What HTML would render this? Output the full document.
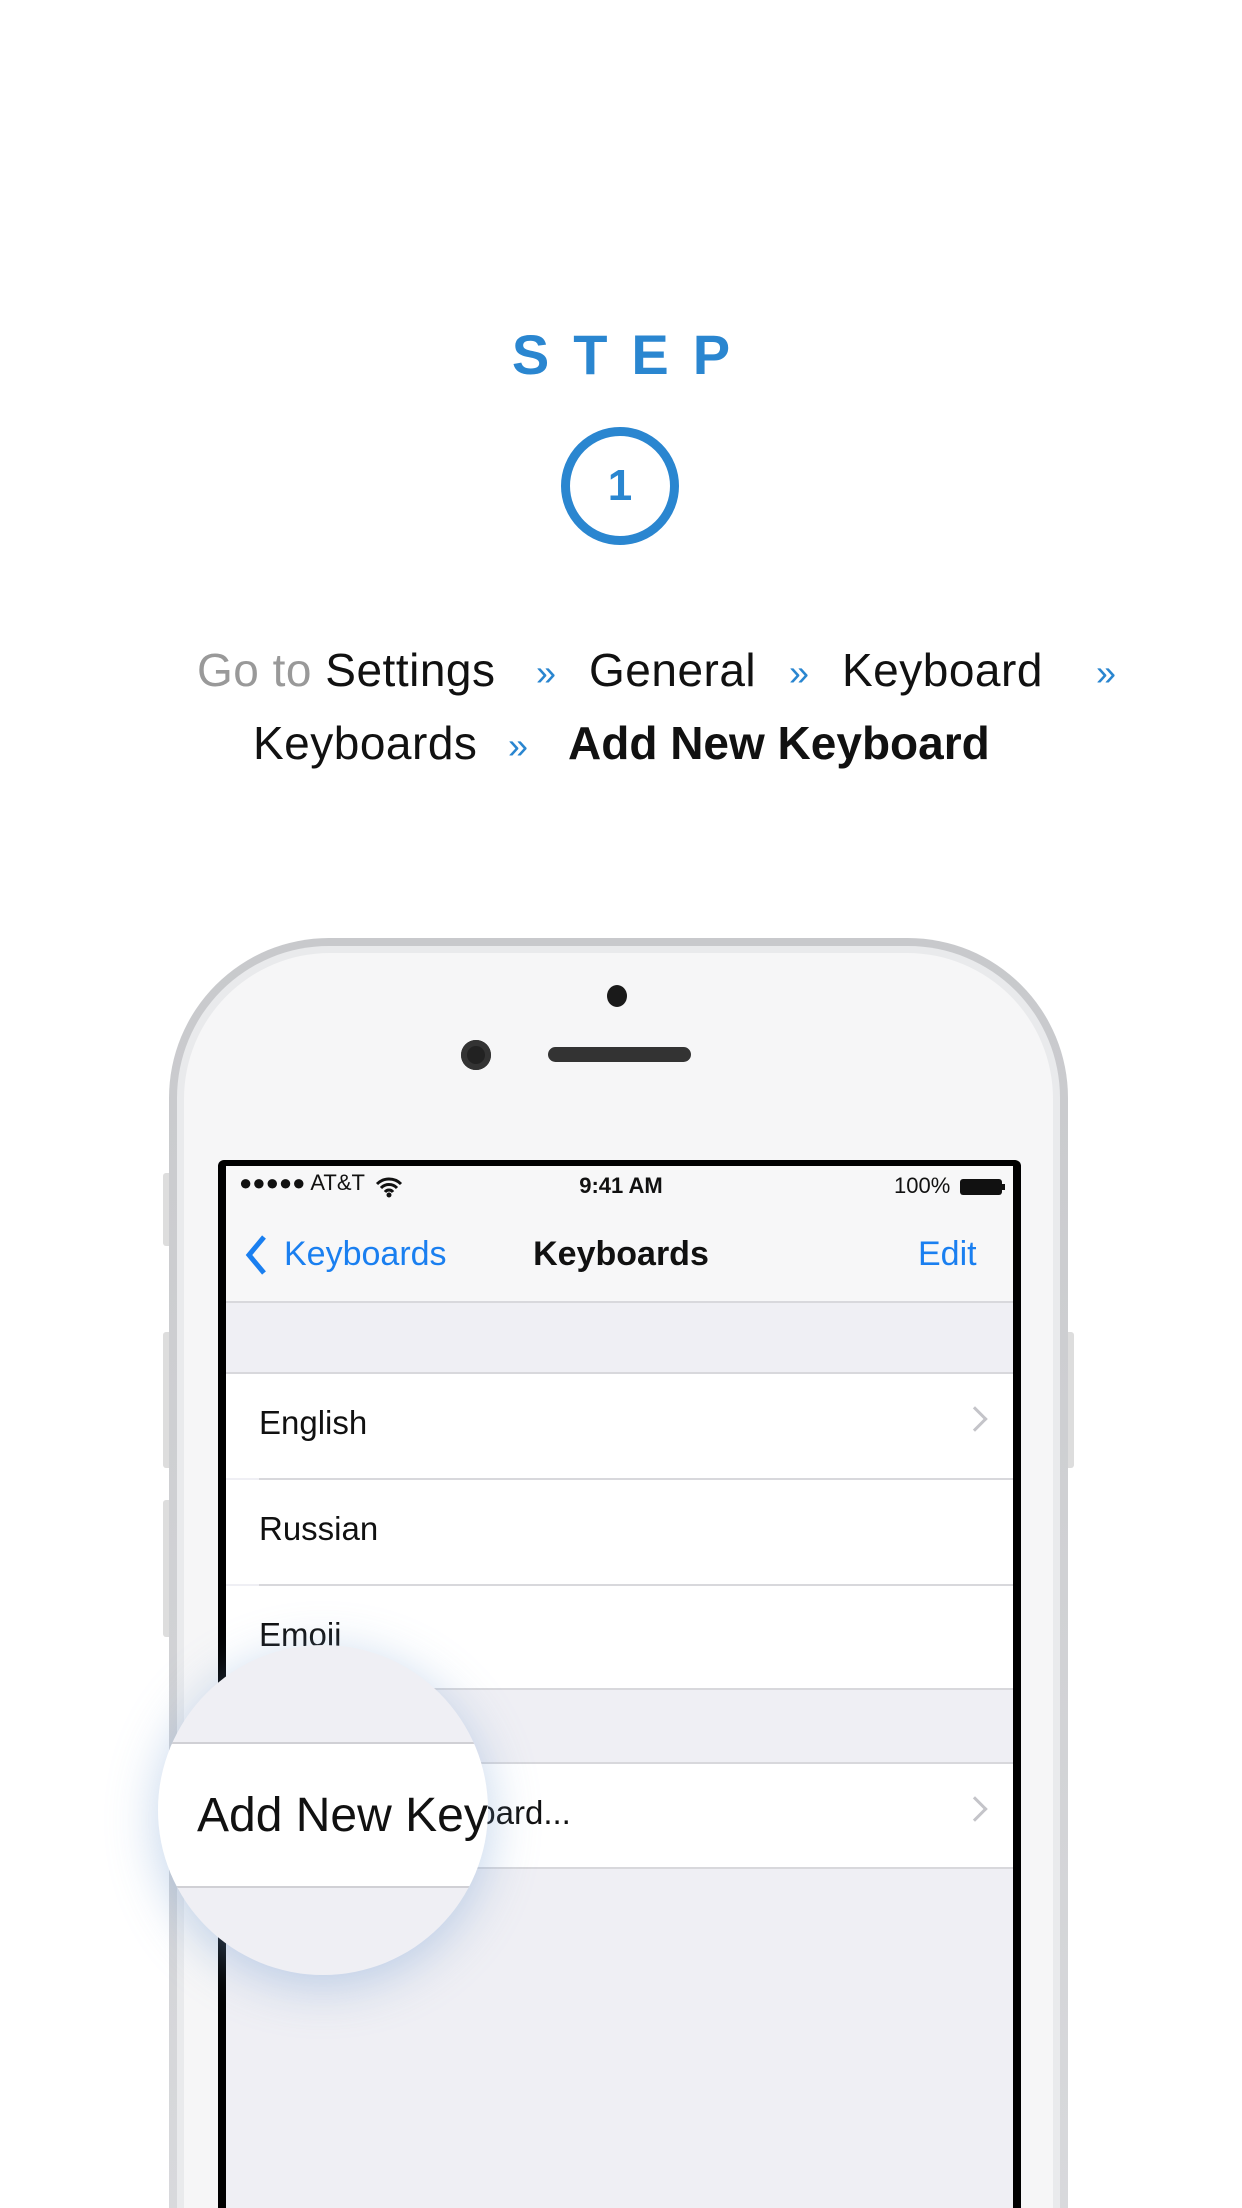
<!DOCTYPE html>
<html style="width:1242px;height:2208px;overflow:hidden"><head><meta charset="utf-8"><style>
*{margin:0;padding:0;box-sizing:border-box}
body{width:1242px;height:2208px;background:#fff;overflow:hidden;font-family:"Liberation Sans",sans-serif}
#w{position:relative;width:1242px;height:2208px;overflow:hidden}
.a{position:absolute;white-space:nowrap}
.bc{font-size:46px;color:#111;top:643px;letter-spacing:0.5px}
.ch{color:#2a86d0;font-size:36px}
.row{position:absolute;left:226px;width:787px;height:104px;background:#fff}
.row span{position:absolute;left:33px;top:30px;font-size:33px;color:#111}
.sep{position:absolute;height:2px;background:#d8d8dc}
.chev{position:absolute;left:740px;top:36px;width:18px;height:18px;border-right:3px solid #c4c4c9;border-top:3px solid #c4c4c9;transform:rotate(45deg)}
</style></head><body><div id="w">
<div class="a" style="left:0;width:1242px;text-align:center;top:322px;font-size:56px;font-weight:bold;color:#2a86d0;letter-spacing:24px;padding-left:24px">STEP</div>
<div class="a" style="left:561px;top:427px;width:118px;height:118px;border:9px solid #2a86d0;border-radius:50%;text-align:center;line-height:100px;font-size:44px;font-weight:bold;color:#2a86d0">1</div>
<div class="a bc" style="left:197px"><span style="color:#999">Go to</span> Settings</div>
<div class="a bc ch" style="left:536px;top:652px">»</div>
<div class="a bc" style="left:589px">General</div>
<div class="a bc ch" style="left:789px;top:652px">»</div>
<div class="a bc" style="left:842px">Keyboard</div>
<div class="a bc ch" style="left:1096px;top:652px">»</div>
<div class="a bc" style="left:253px;top:716px">Keyboards</div>
<div class="a bc ch" style="left:508px;top:725px">»</div>
<div class="a bc" style="left:568px;top:716px;font-weight:bold;letter-spacing:0">Add New Keyboard</div>

<div class="a" style="left:163px;top:1173px;width:10px;height:73px;background:#ddd;border-radius:3px"></div>
<div class="a" style="left:163px;top:1332px;width:10px;height:136px;background:#ddd;border-radius:3px"></div>
<div class="a" style="left:163px;top:1500px;width:10px;height:137px;background:#ddd;border-radius:3px"></div>
<div class="a" style="left:1064px;top:1332px;width:10px;height:136px;background:#ddd;border-radius:3px"></div>
<div class="a" style="left:169px;top:938px;width:899px;height:1600px;border-radius:160px;background:linear-gradient(#c8c9cc,#dcdde0);"></div>
<div class="a" style="left:177px;top:946px;width:883px;height:1600px;border-radius:152px;background:#e9eaec"></div>
<div class="a" style="left:184px;top:953px;width:869px;height:1600px;border-radius:146px;background:#f6f6f7"></div>
<div class="a" style="left:607px;top:985px;width:20px;height:22px;border-radius:50%;background:#1a1a1a"></div>
<div class="a" style="left:461px;top:1040px;width:30px;height:30px;border-radius:50%;background:#222;box-shadow:inset 0 0 0 6px #333"></div>
<div class="a" style="left:548px;top:1047px;width:143px;height:15px;border-radius:8px;background:#333"></div>
<div class="a" style="left:218px;top:1160px;width:803px;height:1100px;background:#000;border-radius:6px"></div>
<div class="a" style="left:226px;top:1166px;width:787px;height:1100px;background:#efeff4"></div>
<div class="a" style="left:226px;top:1166px;width:787px;height:135px;background:#f7f7f8"></div>
<div class="a" style="left:239px;top:1170px;font-size:22px;color:#111">●●●●● AT&amp;T</div>
<svg class="a" style="left:375px;top:1176px" width="28" height="22" viewBox="0 0 28 22"><path d="M2 8a17 17 0 0 1 24 0M6 12a11 11 0 0 1 16 0M10 16a5 5 0 0 1 8 0" fill="none" stroke="#111" stroke-width="3"/><circle cx="14" cy="19" r="2.5" fill="#111"/></svg>
<div class="a" style="left:0;width:1242px;text-align:center;top:1173px;font-size:22px;font-weight:bold;color:#111">9:41 AM</div>
<div class="a" style="left:894px;top:1173px;font-size:22px;color:#111">100%</div>
<div class="a" style="left:960px;top:1179px;width:42px;height:16px;background:#111;border-radius:3px"></div>
<div class="a" style="left:1002px;top:1184px;width:3px;height:6px;background:#111"></div>
<svg class="a" style="left:244px;top:1234px" width="26" height="42"><path d="M20 3L5 21l15 18" fill="none" stroke="#1a7ff0" stroke-width="5"/></svg>
<div class="a" style="left:284px;top:1235px;font-size:34px;color:#1a7ff0">Keyboards</div>
<div class="a" style="left:0;width:1242px;text-align:center;top:1235px;font-size:34px;font-weight:bold;color:#111">Keyboards</div>
<div class="a" style="left:918px;top:1235px;font-size:34px;color:#1a7ff0">Edit</div>
<div class="sep" style="left:226px;top:1301px;width:787px"></div>
<div class="sep" style="left:226px;top:1372px;width:787px"></div>
<div class="row" style="top:1374px"><span>English</span><div class="chev"></div></div>
<div class="sep" style="left:259px;top:1478px;width:754px"></div>
<div class="row" style="top:1480px"><span>Russian</span></div>
<div class="sep" style="left:259px;top:1584px;width:754px"></div>
<div class="row" style="top:1586px"><span>Emoji</span></div>
<div class="sep" style="left:226px;top:1688px;width:787px"></div>
<div class="sep" style="left:226px;top:1762px;width:787px"></div>
<div class="row" style="top:1764px"><span>Add New Keyboard...</span><div class="chev"></div></div>
<div class="sep" style="left:226px;top:1867px;width:787px"></div>
<div class="a" style="left:158px;top:1645px;width:330px;height:330px;border-radius:50%;background:#efeff4;overflow:hidden;box-shadow:0 10px 50px rgba(120,160,210,.45)">
 <div class="a" style="left:0;top:97px;width:330px;height:2px;background:#d0d0d5"></div>
 <div class="a" style="left:0;top:99px;width:330px;height:142px;background:#fff"></div>
 <div class="a" style="left:0;top:241px;width:330px;height:2px;background:#d0d0d5"></div>
 <div class="a" style="left:39px;top:143px;font-size:48px;color:#111">Add New Key</div>
</div>
</div></body></html>
